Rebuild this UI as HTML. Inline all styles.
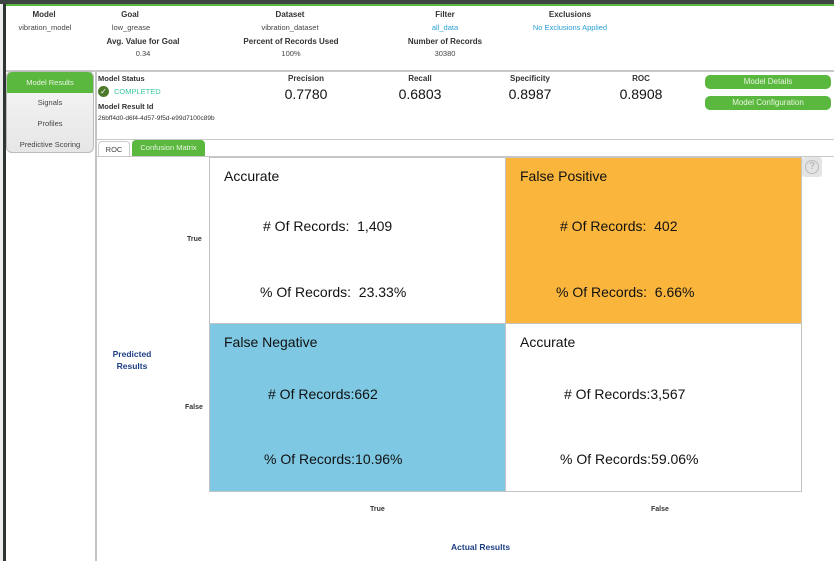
<!DOCTYPE html>
<html><head><style>
*{margin:0;padding:0;box-sizing:border-box}
body{width:834px;height:561px;overflow:hidden;background:#fff;font-family:"Liberation Sans",sans-serif;position:relative;color:#222}
.a{position:absolute;white-space:nowrap}
.h{font-size:8px;font-weight:bold;color:#333;text-align:center}
.v{font-size:7.5px;color:#444;text-align:center}
.blue{color:#2a9fd6}
.big{font-size:14px;color:#111;text-align:center}
.cell{position:absolute;border:1px solid #c4c4c4}
.cell .t{position:absolute;left:14px;top:10px;font-size:14px;color:#111}
.cell .r{position:absolute;font-size:14px;color:#111;white-space:nowrap}
.btn{position:absolute;left:705px;width:126px;height:14px;background:#5bb83e;border-radius:5px;color:#eaf5e4;font-size:8px;text-align:center;line-height:14px}
.nav{position:absolute;left:7px;width:86px;height:21px;font-size:7.5px;color:#444;text-align:center;line-height:21px}
</style></head><body>
<div class="a" style="left:0;top:0;width:834px;height:4px;background:#3d4443"></div>
<div class="a" style="left:0;top:4px;width:834px;height:2px;background:#5bb83e"></div>
<div class="a" style="left:3px;top:4px;width:3px;height:557px;background:#2e3535"></div>
<div class="a" style="left:0;top:4px;width:3px;height:557px;background:#eee"></div>

<div class="a h" style="left:20px;top:10px;width:48px">Model</div>
<div class="a v" style="left:10px;top:23px;width:70px">vibration_model</div>
<div class="a h" style="left:110px;top:10px;width:40px">Goal</div>
<div class="a v" style="left:100px;top:23px;width:62px">low_grease</div>
<div class="a h" style="left:250px;top:10px;width:80px">Dataset</div>
<div class="a v" style="left:240px;top:23px;width:100px">vibration_dataset</div>
<div class="a h" style="left:425px;top:10px;width:40px">Filter</div>
<div class="a v blue" style="left:420px;top:23px;width:50px">all_data</div>
<div class="a h" style="left:540px;top:10px;width:60px">Exclusions</div>
<div class="a v blue" style="left:520px;top:23px;width:100px">No Exclusions Applied</div>
<div class="a h" style="left:95px;top:37px;width:96px">Avg. Value for Goal</div>
<div class="a v" style="left:123px;top:49px;width:40px">0.34</div>
<div class="a h" style="left:236px;top:37px;width:110px">Percent of Records Used</div>
<div class="a v" style="left:271px;top:49px;width:40px">100%</div>
<div class="a h" style="left:395px;top:37px;width:100px">Number of Records</div>
<div class="a v" style="left:425px;top:49px;width:40px">30380</div>

<div class="a" style="left:6px;top:70px;width:828px;height:2px;background:#c8c8c8"></div>
<div class="a" style="left:95px;top:72px;width:2px;height:489px;background:#c4c4c4"></div>

<div class="a" style="left:6px;top:71px;width:88px;height:82px;border:1px solid #bbb;border-radius:6px;background:linear-gradient(#f6f6f6,#e6e6e6)"></div>
<div class="nav" style="top:72px;background:#5bb83e;color:#eaf5e4;border-radius:5px 5px 0 0">Model Results</div>
<div class="nav" style="top:92px">Signals</div>
<div class="nav" style="top:113px">Profiles</div>
<div class="nav" style="top:134px">Predictive Scoring</div>

<div class="a" style="left:98px;top:74px;font-size:7.5px;font-weight:bold;color:#333">Model Status</div>
<div class="a" style="left:98px;top:86px;width:11px;height:11px;border-radius:50%;background:#4e7a2c;color:#fff;font-size:8px;text-align:center;line-height:11px">✓</div>
<div class="a" style="left:114px;top:87px;font-size:7.5px;color:#3cc9a0">COMPLETED</div>
<div class="a" style="left:98px;top:102px;font-size:7.5px;font-weight:bold;color:#333">Model Result Id</div>
<div class="a" style="left:98px;top:115px;font-size:6.5px;color:#333">26bff4d0-d6f4-4d57-9f5d-e99d7100c89b</div>

<div class="a h" style="left:276px;top:74px;width:60px">Precision</div>
<div class="a big" style="left:271px;top:86px;width:70px">0.7780</div>
<div class="a h" style="left:390px;top:74px;width:60px">Recall</div>
<div class="a big" style="left:385px;top:86px;width:70px">0.6803</div>
<div class="a h" style="left:500px;top:74px;width:60px">Specificity</div>
<div class="a big" style="left:495px;top:86px;width:70px">0.8987</div>
<div class="a h" style="left:611px;top:74px;width:60px">ROC</div>
<div class="a big" style="left:606px;top:86px;width:70px">0.8908</div>
<div class="btn" style="top:75px">Model Details</div>
<div class="btn" style="top:96px">Model Configuration</div>

<div class="a" style="left:97px;top:139px;width:737px;height:1px;background:#c8c8c8"></div>
<div class="a" style="left:98px;top:141px;width:32px;height:16px;border:1px solid #ccc;border-bottom:none;border-radius:4px 4px 0 0;font-size:7.5px;color:#444;text-align:center;line-height:15px">ROC</div>
<div class="a" style="left:132px;top:140px;width:73px;height:17px;background:#5bb83e;border-radius:4px 4px 0 0;font-size:7.5px;color:#eaf5e4;text-align:center;line-height:16px">Confusion Matrix</div>
<div class="a" style="left:97px;top:156px;width:737px;height:1px;background:#c8c8c8"></div>

<div class="cell" style="left:209px;top:157px;width:297px;height:167px;background:#fff">
<div class="t">Accurate</div>
<div class="r" style="left:53px;top:60px"># Of Records:&nbsp; 1,409</div>
<div class="r" style="left:50px;top:126px">% Of Records:&nbsp; 23.33%</div></div>
<div class="cell" style="left:505px;top:157px;width:297px;height:167px;background:#fab53c">
<div class="t">False Positive</div>
<div class="r" style="left:54px;top:60px"># Of Records:&nbsp; 402</div>
<div class="r" style="left:50px;top:126px">% Of Records:&nbsp; 6.66%</div></div>
<div class="cell" style="left:209px;top:323px;width:297px;height:169px;background:#7ec8e3">
<div class="t">False Negative</div>
<div class="r" style="left:58px;top:62px"># Of Records:662</div>
<div class="r" style="left:54px;top:127px">% Of Records:10.96%</div></div>
<div class="cell" style="left:505px;top:323px;width:297px;height:169px;background:#fff">
<div class="t">Accurate</div>
<div class="r" style="left:58px;top:62px"># Of Records:3,567</div>
<div class="r" style="left:54px;top:127px">% Of Records:59.06%</div></div>

<div class="a" style="left:802px;top:157px;width:20px;height:20px;background:#e4e4e4;border-radius:3px"></div>
<div class="a" style="left:805px;top:160px;width:14px;height:14px;border:1.5px solid #bbb;border-radius:50%;color:#bbb;font-size:10px;text-align:center;line-height:11px;font-weight:bold">?</div>

<div class="a" style="left:187px;top:236px;font-size:7px;font-weight:bold;color:#333">True</div>
<div class="a" style="left:185px;top:404px;font-size:7px;font-weight:bold;color:#333">False</div>
<div class="a" style="left:100px;top:348px;width:64px;text-align:center;font-size:8.5px;font-weight:bold;color:#1f3f84;line-height:12px;white-space:normal">Predicted<br>Results</div>
<div class="a" style="left:370px;top:506px;font-size:7px;font-weight:bold;color:#333">True</div>
<div class="a" style="left:651px;top:506px;font-size:7px;font-weight:bold;color:#333">False</div>
<div class="a" style="left:451px;top:542px;font-size:8.5px;font-weight:bold;color:#1f3f84">Actual Results</div>
</body></html>
